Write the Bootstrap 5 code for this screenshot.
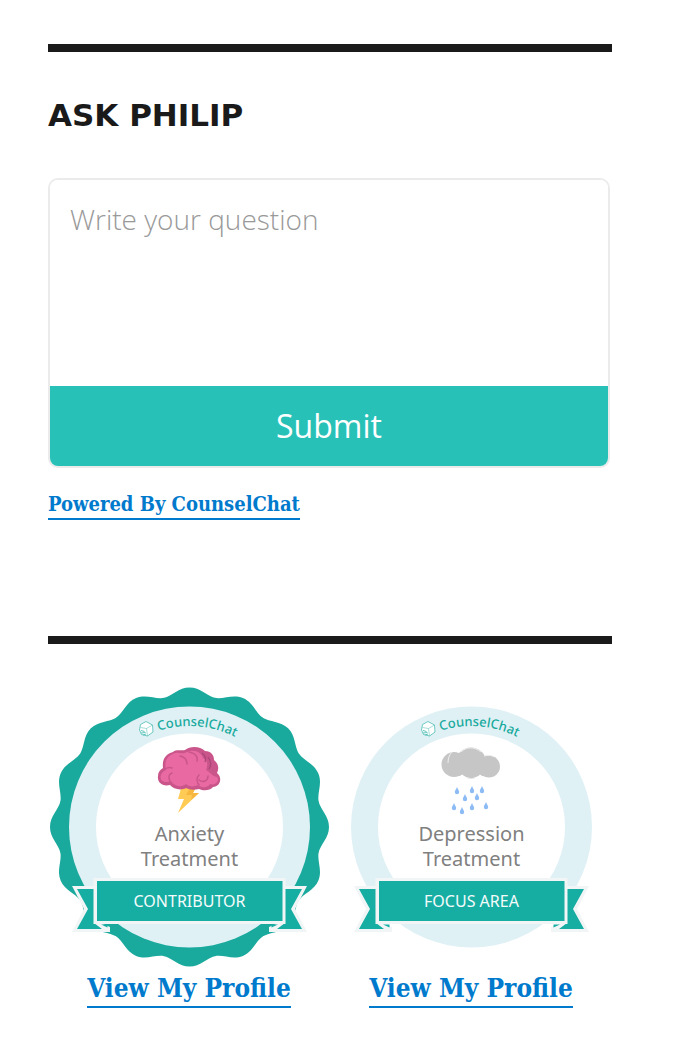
<!DOCTYPE html>
<html lang="en">
<head>
<meta charset="utf-8">
<meta name="viewport" content="width=device-width, initial-scale=1">
<title>Ask Philip</title>
<link href="https://cdn.jsdelivr.net/npm/bootstrap@5.3.0/dist/css/bootstrap.min.css" rel="stylesheet">
<style>
  body { font-family: "Open Sans", "Noto Sans", sans-serif; color: #1a1a1a; background: #fff; }
  .sidebar { padding: 44px 66px 40px 48px; }
  .widget { border-top: 8px solid #1a1a1a; }
  .widget-ask { padding-top: 44px; margin-bottom: 116px; }
  .widget-badges { padding-top: 42px; }
  .widget-title { font-family: "DejaVu Sans", sans-serif; font-size: 31px; line-height: 38px; font-weight: 700; margin-bottom: 44px; }
  .ask-box { border: 2px solid #ebebeb; border-radius: 10px; margin-right: 2px; }
  .ask-box textarea { height: 206px; padding: 20px; font-size: 28px; line-height: 38px; font-weight: 300; color: #555; resize: none; }
  .ask-box textarea::placeholder { color: #999; opacity: 1; }
  .ask-box .btn { --bs-btn-bg: #28c1b8; --bs-btn-color: #fff; --bs-btn-hover-bg: #22aea6; --bs-btn-hover-color: #fff; height: 80px; font-size: 32px; line-height: 40px; }
  .serif-link { font-family: "DejaVu Serif Condensed", "DejaVu Serif", serif; font-weight: 700; color: #007acc; text-decoration: none; border-bottom: 2px solid currentColor; display: inline-block; }
  .powered { font-size: 20px; line-height: 28px; margin-top: 22px; }
  .profile { font-size: 26px; line-height: 36px; margin-top: 2px; }
  svg text { font-family: "Noto Sans", sans-serif; text-anchor: middle; }
</style>
</head>
<body>
<svg width="0" height="0" class="position-absolute" aria-hidden="true">
  <defs>
    <path id="scallop" d="M0 0L-26-129C-17-131-11-139.500 0-139.500S17-131 26-129Z"/>
    <path id="arc" d="M40.500 141A101 101 0 0 1 242.500 141"/>
    <g id="seal">
      <circle cx="141.500" cy="141" r="120.500" fill="#e0f1f6"/>
      <circle cx="141.500" cy="141" r="93.500" fill="#fff"/>
      <g fill="#fff" stroke="#4dbdb3" stroke-width=".8" stroke-linejoin="round">
        <path d="M92.500 38.500 98 35.500 104.500 39 105 46 99.500 50 93.500 48.500 91.500 44Z"/>
        <path d="M92.500 41.500 98.500 42.500 104.500 39M98.500 42.500 99.500 50" stroke-width=".5"/>
        <path d="M93 44.500 96.500 45.500M93 47 97.500 46.500M95 49 98 48" stroke-width=".9"/>
      </g>
      <text font-size="13" font-weight="500" fill="#18aa9d"><textPath href="#arc" startOffset="52.500%">CounselChat</textPath></text>
    </g>
    <g id="tail">
      <path d="M24 200H50V236L62 241V246H24L36 223Z" fill="#f1f5f6"/>
      <path d="M29 203H46V237L54 243H29L40 223Z" fill="#16aea3"/>
      <path d="M53 238.500H59.500V241.500Z" fill="#16aea3"/>
    </g>
    <g id="ribbon">
      <use href="#tail"/>
      <use href="#tail" transform="translate(283 0) scale(-1 1)"/>
      <path d="M45.500 192H237.500V238H45.500Z" fill="#f1f5f6"/>
      <path d="M49 195H234.500V235H49Z" fill="#16aea3"/>
    </g>
  </defs>
</svg>

<aside class="sidebar">
  <section class="widget widget-ask">
    <h2 class="widget-title text-uppercase">Ask Philip</h2>
    <form class="ask-box overflow-hidden" onsubmit="return false">
      <textarea id="question" class="form-control border-0 rounded-0 shadow-none" aria-label="Write your question" placeholder="Write your question"></textarea>
      <button type="submit" class="btn w-100 border-0 rounded-0">Submit</button>
    </form>
    <a href="#" class="serif-link powered">Powered By CounselChat</a>
  </section>

  <section class="widget widget-badges">
    <div class="row g-0 text-center">
      <div class="col-6">
        <svg class="d-block w-100" viewBox="0 0 282 282" role="img" aria-label="Anxiety Treatment contributor">
          <g fill="#1aaa9d" transform="translate(141.500 141)">
            <circle r="130"/>
            <use href="#scallop"/><use href="#scallop" transform="rotate(22.500)"/><use href="#scallop" transform="rotate(45)"/><use href="#scallop" transform="rotate(67.500)"/>
            <use href="#scallop" transform="rotate(90)"/><use href="#scallop" transform="rotate(112.500)"/><use href="#scallop" transform="rotate(135)"/><use href="#scallop" transform="rotate(157.500)"/>
            <use href="#scallop" transform="rotate(180)"/><use href="#scallop" transform="rotate(202.500)"/><use href="#scallop" transform="rotate(225)"/><use href="#scallop" transform="rotate(247.500)"/>
            <use href="#scallop" transform="rotate(270)"/><use href="#scallop" transform="rotate(292.500)"/><use href="#scallop" transform="rotate(315)"/><use href="#scallop" transform="rotate(337.500)"/>
          </g>
          <use href="#seal"/>
          <!-- lightning -->
          <path d="M134 99H149L145 107H151L130 127 136 113H130Z" fill="#ffcb55"/>
          <path d="M138 99H149L145 107H151L143 114 144 109H138L142 102Z" fill="#f7b63e"/>
          <!-- brain -->
          <path d="M125 66C128 63 134 65 137 64C142 60 152 60 157 65C163 65 166 69 166 74C171 78 171 83 169 87C175 92 172 101 165 101C162 105 155 105 151 103C146 104 142 104 138 102C133 105 125 103 122 99C114 101 109 96 110 90C110 86 112 84 115 82C114 74 117 68 125 66Z" fill="#c9558b"/>
          <path d="M125 68C130 65 134 69 139 66C146 63 153 66 155 72C160 74 160 80 158 84C163 87 164 90 169 91C172 95 167 100 162 98C160 102 153 102 150 99C146 101 141 101 138 98C133 102 126 100 123 95C116 98 111 94 113 89C114 86 116 85 118 84C116 76 119 70 125 68Z" fill="#e96aa2"/>
          <path d="M117 83C120 81 122 81 124 82M122 95C120 91 121 88 124 87M132 70C137 71 139 74 139 78M141 66C147 67 150 70 149 75M151 99C148 95 149 91 151 89M151 94C155 97 160 95 160 90" fill="none" stroke="#c9558b" stroke-width="1.500" stroke-linecap="round"/>
          <path d="M154 67C158 70 158 73 157 76M160 71C164 76 163 80 161 83" fill="none" stroke="#a94679" stroke-width="1.200"/>
          <g font-size="20" fill="#808080"><text x="141.500" y="155">Anxiety</text><text x="141.500" y="180">Treatment</text></g>
          <use href="#ribbon"/>
          <text x="141.500" y="221" font-size="16" fill="#f4fbfb">CONTRIBUTOR</text>
        </svg>
        <a href="#" class="serif-link profile">View My Profile</a>
      </div>
      <div class="col-6">
        <svg class="d-block w-100" viewBox="0 0 282 282" role="img" aria-label="Depression Treatment focus area">
          <use href="#seal"/>
          <!-- cloud -->
          <g fill="#c6c6c6">
            <circle cx="124" cy="78.500" r="12.500"/><circle cx="141" cy="77" r="15.500"/><circle cx="159" cy="80.500" r="11"/>
            <path d="M124 80H160V90H124Z"/>
          </g>
          <path d="M118 77C118 73 119 69 122 66M131 66C136 61 144 60 151 66M154 70C157 69 162 69 164 71" fill="none" stroke="#eee"/>
          <path d="M125 92C129 91 130 90 132 88.500C135 91 138 92 141 92ZM141 92C145 92 149 90 150 88.500C153 91 155 92 158 92Z" fill="#fff"/>
          <!-- rain -->
          <g fill="#8dbcf5">
            <path id="drop" d="M127 101C126 103.500 124.800 104.800 124.800 106A2.200 2.200 0 0 0 129.200 106C129.200 104.800 128 103.500 127 101Z"/>
            <use href="#drop" x="15" y="-1"/><use href="#drop" x="25" y="-1"/><use href="#drop" x="8" y="7"/><use href="#drop" x="20" y="6"/>
            <use href="#drop" x="-3" y="16"/><use href="#drop" x="5" y="20"/><use href="#drop" x="15" y="16"/><use href="#drop" x="29" y="15"/>
          </g>
          <g font-size="20" fill="#808080"><text x="141.500" y="155">Depression</text><text x="141.500" y="180">Treatment</text></g>
          <use href="#ribbon"/>
          <text x="141.500" y="221" font-size="16" fill="#f4fbfb">FOCUS AREA</text>
        </svg>
        <a href="#" class="serif-link profile">View My Profile</a>
      </div>
    </div>
  </section>
</aside>
<script src="https://cdn.jsdelivr.net/npm/bootstrap@5.3.0/dist/js/bootstrap.bundle.min.js"></script>
</body>
</html>
